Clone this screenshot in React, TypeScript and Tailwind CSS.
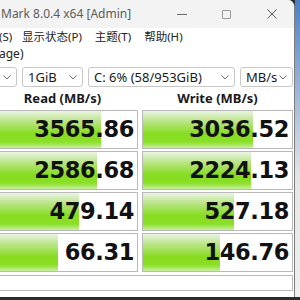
import React from 'react';

const rows = [
  { read: '3565.86', readFill: 113, write: '3036.52', writeFill: 110 },
  { read: '2586.68', readFill: 109, write: '2224.13', writeFill: 108 },
  { read: '479.14', readFill: 91, write: '527.18', writeFill: 91 },
  { read: '66.31', readFill: 70, write: '146.76', writeFill: 77 },
];

const Chevron = () => (
  <svg width="8" height="5" viewBox="0 0 8 5" className="shrink-0">
    <path d="M0.5 0.5 L4 4 L7.5 0.5" fill="none" stroke="#6b6b6b" strokeWidth="1" />
  </svg>
);

const Combo = ({ label, width }: { label: string; width: string }) => (
  <div className={`flex h-[20px] items-center justify-between rounded-[3px] border border-[#c8c8c8] bg-white pr-[5px] pl-[5px] ${width}`}>
    <span className="text-[13px] leading-none text-[#1a1a1a]">{label}</span>
    <Chevron />
  </div>
);

const ResultCell = ({ value, fill }: { value: string; fill: number }) => (
  <div className="relative flex h-[39px] items-center justify-end border border-[#b9b9b9] bg-white pr-[3px]">
    <div
      className="absolute top-0 bottom-0 left-0 bg-[linear-gradient(to_bottom,#eaf4e3_0%,#b9e585_28%,#86dc1e_62%,#8be028_84%,#c9efa0_100%)]"
      style={{ width: fill }}
    />
    <span className="relative font-['DejaVu_Sans',sans-serif] text-[22.5px] leading-none font-bold tracking-[-0.4px] text-[#111]">
      {value}
    </span>
  </div>
);

export default function App() {
  return (
    <div className="flex h-[300px] w-[300px] flex-col overflow-hidden bg-[#2b2b2b] font-['Noto_Sans','Noto_Sans_CJK_SC',sans-serif]">
      <div className="flex h-[297px]">
        <div className="flex w-[295px] flex-col overflow-hidden rounded-tr-[7px] border-r border-[#7d7d7d] bg-white">
          <div className="flex h-[28px] shrink-0 items-center bg-[#f3f3f3] pl-[1px]">
            <span className="text-[12px] text-[#5c5c5c]">Mark 8.0.4 x64 [Admin]</span>
            <div className="ml-auto flex items-center">
              <div className="flex w-[45px] justify-center">
                <div className="h-px w-[10px] bg-[#6b6b6b]" />
              </div>
              <div className="flex w-[45px] justify-center">
                <div className="h-[9px] w-[9px] rounded-[1px] border border-[#9a9a9a]" />
              </div>
              <div className="flex w-[45px] justify-center">
                <svg width="10" height="10" viewBox="0 0 10 10">
                  <path d="M0.5 0.5 L9.5 9.5 M9.5 0.5 L0.5 9.5" stroke="#5a5a5a" strokeWidth="1" />
                </svg>
              </div>
            </div>
          </div>
          <div className="flex h-[17px] items-center gap-[13px] text-[11.5px] text-[#222]">
            <span className="-ml-[1px] w-[10px]">(S)</span>
            <span>显示状态(P)</span>
            <span>主题(T)</span>
            <span>帮助(H)</span>
          </div>
          <div className="flex h-[17px] items-center text-[12px] text-[#222]">
            <span className="-ml-[1px]">age)</span>
          </div>
          <div className="mt-[5px] flex gap-[5px] pr-[1px]">
            <div className="-ml-[20px]">
              <Combo label="" width="w-[37px]" />
            </div>
            <Combo label="1GiB" width="w-[61px]" />
            <Combo label="C: 6% (58/953GiB)" width="w-[147px]" />
            <Combo label="MB/s" width="w-[53px]" />
          </div>
          <div className="-ml-[13px] flex h-[23px] items-end gap-[4px] pb-[2px] text-[13px] font-bold text-[#1a1a1a]">
            <div className="w-[151px] text-center">Read (MB/s)</div>
            <div className="w-[151px] text-center">Write (MB/s)</div>
          </div>
          <div className="-ml-[13px] flex flex-col gap-[2px]">
            {rows.map((r) => (
              <div key={r.read} className="flex gap-[4px]">
                <div className="w-[151px]">
                  <ResultCell value={r.read} fill={r.readFill} />
                </div>
                <div className="w-[151px]">
                  <ResultCell value={r.write} fill={r.writeFill} />
                </div>
              </div>
            ))}
          </div>
          <div className="-ml-[13px] mt-[3px] h-[16px] w-[306px] shrink-0 border border-[#b9b9b9] bg-white" />
        </div>
        <div className="flex-1 bg-[linear-gradient(to_bottom,#4b7fc4_0%,#9db6d8_30%,#e6e6e6_60%,#f0f0f0_100%)]" />
      </div>
    </div>
  );
}
